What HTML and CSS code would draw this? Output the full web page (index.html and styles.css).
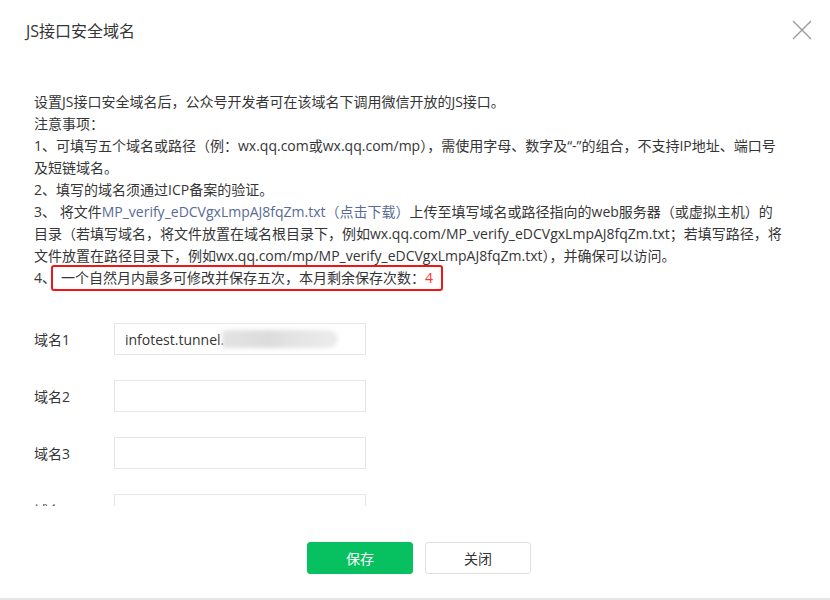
FILE: index.html
```html
<!DOCTYPE html>
<html lang="zh-CN">
<head>
<meta charset="utf-8">
<title>JS接口安全域名</title>
<link rel="stylesheet" href="styles.css">
</head>
<body>
<div class="dialog">
  <div class="dialog-hd">
    <h3 class="dialog-title">JS接口安全域名</h3>
    <button class="close-btn" aria-label="关闭">
      <svg width="20" height="20" viewBox="0 0 20 20"><path d="M1 1L19 19M19 1L1 19" stroke="#9a9a9a" stroke-width="1.3" fill="none"/></svg>
    </button>
  </div>
  <div class="dialog-bd">
    <div class="tips">
      设置JS接口安全域名后，公众号开发者可在该域名下调用微信开放的JS接口。<br>
      注意事项：<br>
      1、可填写五个域名或路径（例：wx.qq.com或wx.qq.com/mp），需使用字母、数字及“-”的组合，不支持IP地址、端口号<br>
      及短链域名。<br>
      2、填写的域名须通过ICP备案的验证。<br>
      3、 将文件<a class="link" href="#">MP_verify_eDCVgxLmpAJ8fqZm.txt（点击下载）</a>上传至填写域名或路径指向的web服务器（或虚拟主机）的<br>
      目录（若填写域名，将文件放置在域名根目录下，例如wx.qq.com/MP_verify_eDCVgxLmpAJ8fqZm.txt；若填写路径，将<br>
      文件放置在路径目录下，例如wx.qq.com/mp/MP_verify_eDCVgxLmpAJ8fqZm.txt），并确保可以访问。<br>
      4、<span class="highlight">一个自然月内最多可修改并保存五次，本月剩余保存次数：<em class="count">4</em></span>
    </div>
    <div class="form">
      <div class="form-row">
        <label class="form-label">域名1</label>
        <div class="input-box"><span class="input-text">infotest.tunnel.</span><span class="blur"></span></div>
      </div>
      <div class="form-row">
        <label class="form-label">域名2</label>
        <div class="input-box"></div>
      </div>
      <div class="form-row">
        <label class="form-label">域名3</label>
        <div class="input-box"></div>
      </div>
      <div class="form-row">
        <label class="form-label">域名4</label>
        <div class="input-box"></div>
      </div>
      <div class="form-row">
        <label class="form-label">域名5</label>
        <div class="input-box"></div>
      </div>
    </div>
  </div>
  <div class="dialog-ft">
    <button class="btn btn-primary">保存</button>
    <button class="btn btn-default">关闭</button>
  </div>
</div>
</body>
</html>
```
FILE: styles.css
```css
* { box-sizing: border-box; }
html, body { margin: 0; padding: 0; }
body {
  background: #e6e6e6;
  font-family: "Open Sans", "Noto Sans CJK SC", sans-serif;
  color: #353535;
  font-size: 14px;
}
.dialog {
  width: 830px;
  height: 598px;
  background: #fff;
  display: flex;
  flex-direction: column;
}
.dialog-hd {
  height: 62px;
  flex: none;
  display: flex;
  align-items: center;
  justify-content: space-between;
  padding: 0 18px 0 26px;
}
.dialog-title {
  margin: 0;
  font-size: 16px;
  font-weight: normal;
  color: #353535;
  line-height: 24px;
}
.close-btn {
  border: 0;
  background: none;
  padding: 0;
  width: 20px;
  height: 20px;
  margin-top: -2px;
  display: flex;
}
.dialog-bd {
  height: 444px;
  flex: none;
  overflow: hidden;
  padding: 29px 20px 0 34px;
}
.tips {
  line-height: 22px;
  white-space: nowrap;
}
.link {
  color: #576b95;
  text-decoration: none;
}
.highlight {
  display: inline-block;
  border: 2px solid #f01616;
  border-radius: 3px;
  padding: 0 8px 0 8px;
  margin-left: -5px;
  line-height: 22px;
  vertical-align: top;
  margin-top: -2px;
}
.count {
  font-style: normal;
  color: #f43530;
}
.form {
  margin-top: 32px;
  display: flex;
  flex-direction: column;
  gap: 25px;
}
.form-row {
  display: flex;
  align-items: center;
  height: 32px;
}
.form-label {
  width: 80px;
  flex: none;
  color: #353535;
}
.input-box {
  width: 252px;
  height: 32px;
  border: 1px solid #e4e8eb;
  display: flex;
  align-items: center;
  padding-left: 10px;
  color: #353535;
  overflow: hidden;
}
.input-text { flex: none; }
.blur {
  display: inline-block;
  width: 116px;
  height: 18px;
  margin-left: -2px;
  background: linear-gradient(90deg, #e3e3e3, #dcdcdc 40%, #e6e6e6 70%, #ececec);
  border-radius: 4px 10px 10px 4px;
  filter: blur(2px);
}
.dialog-ft {
  flex: none;
  display: flex;
  justify-content: center;
  gap: 12px;
  padding: 36px 0 0 8px;
}
.btn {
  width: 106px;
  height: 32px;
  border-radius: 3px;
  font-family: "Open Sans", "Noto Sans CJK SC", sans-serif;
  font-size: 14px;
  padding: 0;
}
.btn-primary {
  background: #07c160;
  border: 1px solid #07c160;
  color: #fff;
}
.btn-default {
  background: #fff;
  border: 1px solid #e0e0e0;
  color: #353535;
}
```
